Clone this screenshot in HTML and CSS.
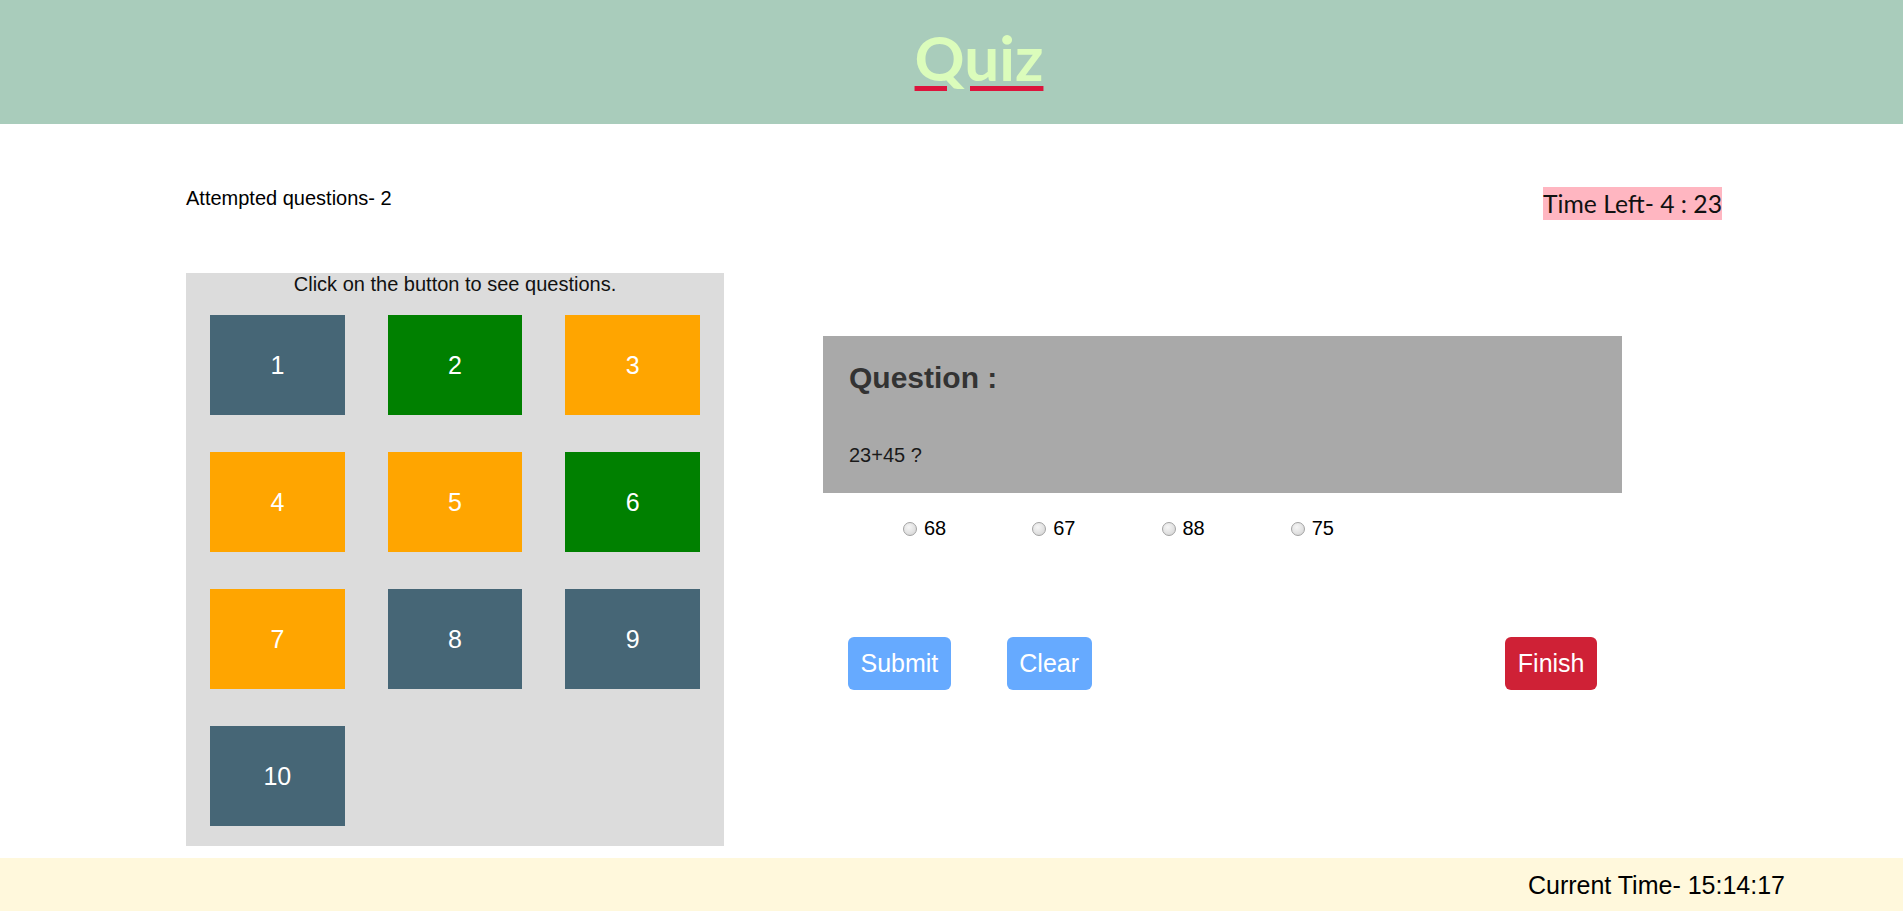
FILE: index.html
```html
<!DOCTYPE html>
<html lang="en">
<head>
<meta charset="utf-8">
<title>Quiz</title>
<link rel="stylesheet" href="styles.css">
</head>
<body>
<header class="top-bar">
  <h1 class="title">Quiz</h1>
</header>
<main class="page">
  <div class="status-row">
    <p class="attempted">Attempted questions- 2</p>
    <span class="timer">Time Left- 4 : 23</span>
  </div>
  <div class="content">
    <section class="palette">
      <p class="palette-hint">Click on the button to see questions.</p>
      <div class="palette-grid">
        <button class="qbtn qbtn-todo">1</button>
        <button class="qbtn qbtn-done">2</button>
        <button class="qbtn qbtn-seen">3</button>
        <button class="qbtn qbtn-seen">4</button>
        <button class="qbtn qbtn-seen">5</button>
        <button class="qbtn qbtn-done">6</button>
        <button class="qbtn qbtn-seen">7</button>
        <button class="qbtn qbtn-todo">8</button>
        <button class="qbtn qbtn-todo">9</button>
        <button class="qbtn qbtn-todo">10</button>
      </div>
    </section>
    <section class="question-area">
      <div class="question-box">
        <h2 class="question-title">Question :</h2>
        <p class="question-text">23+45 ?</p>
      </div>
      <div class="options">
        <label class="option"><input class="radio" type="radio" name="ans"><span>68</span></label>
        <label class="option"><input class="radio" type="radio" name="ans"><span>67</span></label>
        <label class="option"><input class="radio" type="radio" name="ans"><span>88</span></label>
        <label class="option"><input class="radio" type="radio" name="ans"><span>75</span></label>
      </div>
      <div class="actions">
        <button class="action action-blue">Submit</button>
        <button class="action action-blue action-clear">Clear</button>
        <button class="action action-red">Finish</button>
      </div>
    </section>
  </div>
</main>
<footer class="bottom-bar">Current Time- 15:14:17</footer>
</body>
</html>
```

FILE: styles.css
```css
html, body {
  margin: 0;
  padding: 0;
}

body {
  font-family: "Liberation Sans", Arial, sans-serif;
  font-size: 20px;
  color: #000;
  background: #fff;
}

.top-bar {
  background: #a9ccbb;
  height: 124px;
  box-sizing: border-box;
  text-align: center;
  padding-left: 55px;
}

.title {
  margin: 0;
  padding-top: 26px;
  font-family: Lato, "Open Sans", sans-serif;
  font-weight: 700;
  font-size: 62px;
  line-height: 62px;
  color: #dbfcbb;
  text-decoration-line: underline;
  text-decoration-color: #dc143c;
  text-decoration-thickness: 5px;
  text-underline-offset: 5px;
}

.page {
  padding: 0 181px 0 186px;
}

.status-row {
  display: flex;
  justify-content: space-between;
  align-items: flex-start;
  margin-top: 63px;
  height: 33px;
}

.attempted {
  margin: 0;
  line-height: 23px;
}

.timer {
  display: inline-block;
  height: 33px;
  line-height: 33px;
  background: #ffb6c1;
  font-family: Lato, "Open Sans", sans-serif;
  font-size: 24.7px;
  color: #111;
}

.content {
  display: flex;
  align-items: flex-start;
  margin-top: 53px;
}

.palette {
  width: 538px;
  box-sizing: border-box;
  background: #dcdcdc;
  padding: 0 24px 20px;
}

.palette-hint {
  margin: 0 0 19px;
  line-height: 23px;
  text-align: center;
  color: #111;
}

.palette-grid {
  display: grid;
  grid-template-columns: repeat(3, 1fr);
  column-gap: 43px;
  row-gap: 37px;
}

.qbtn {
  height: 100px;
  border: none;
  padding: 0;
  color: #fff;
  font-family: "Liberation Sans", Arial, sans-serif;
  font-size: 25px;
}

.qbtn-todo { background: #466676; }
.qbtn-done { background: #008000; }
.qbtn-seen { background: #ffa500; }

.question-area {
  width: 799px;
  margin-left: 99px;
  padding-top: 63px;
}

.question-box {
  background: #a9a9a9;
  padding: 24px 26px 26px;
}

.question-title {
  margin: 0 0 49px;
  font-size: 30px;
  line-height: 35px;
  font-weight: 700;
  color: #333;
}

.question-text {
  margin: 0;
  line-height: 23px;
  color: #1a1a1a;
}

.options {
  display: flex;
  gap: 86px;
  margin-top: 24px;
  padding-left: 80px;
  line-height: 23px;
}

.option {
  display: flex;
  align-items: center;
  gap: 7px;
}

.radio {
  appearance: none;
  -webkit-appearance: none;
  margin: 0;
  width: 14px;
  height: 14px;
  border-radius: 50%;
  border: 1px solid #a3a3a3;
  box-sizing: border-box;
  background: radial-gradient(circle at 40% 35%, #f6f6f6 0%, #e2e2e2 55%, #cfcfcf 100%);
}

.actions {
  display: flex;
  margin-top: 97px;
  padding: 0 25px;
}

.action {
  height: 53px;
  padding: 0 12.5px;
  border: none;
  border-radius: 6px;
  color: #fff;
  font-family: "Liberation Sans", Arial, sans-serif;
  font-size: 25px;
  line-height: 53px;
}

.action-blue { background: #66aaff; }
.action-red { background: #cf2136; margin-left: auto; }
.action-clear { margin-left: 56px; }

.bottom-bar {
  margin-top: 12px;
  background: #fff8dc;
  padding: 13px 118px 11px 0;
  text-align: right;
  font-size: 25px;
  line-height: 29px;
}
```
